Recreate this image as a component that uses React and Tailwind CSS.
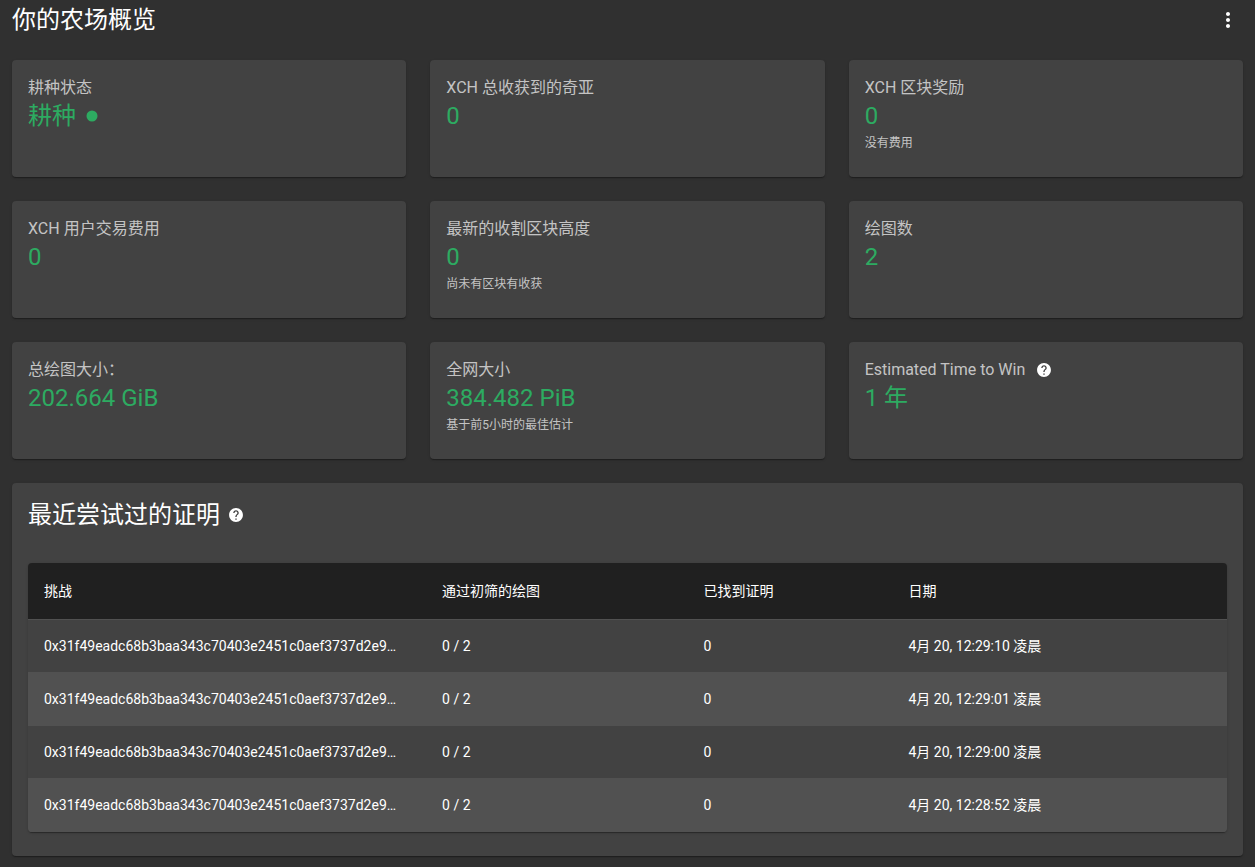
import React from 'react';

const MoreIcon = () => (
    <svg viewBox="0 0 24 24" className="size-6 fill-current" aria-hidden="true">
        <path d="M12 8c1.100 0 2-.9 2-2s-.9-2-2-2-2 .9-2 2 .9 2 2 2zm0 2c-1.100 0-2 .9-2 2s.9 2 2 2 2-.9 2-2-.9-2-2-2zm0 6c-1.100 0-2 .9-2 2s.9 2 2 2 2-.9 2-2-.9-2-2-2z" />
    </svg>
);

const HelpIcon = () => (
    <svg viewBox="-1 -1 26 26" className="size-[18px] shrink-0 fill-white" aria-hidden="true">
        <path d="M12 2C6.480 2 2 6.480 2 12s4.480 10 10 10 10-4.480 10-10S17.520 2 12 2zm1 17h-2v-2h2v2zm2.070-7.750l-.9.920C13.450 12.900 13 13.500 13 15h-2v-.5c0-1.100.45-2.100 1.170-2.830l1.240-1.260c.37-.36.59-.86.59-1.410 0-1.100-.9-2-2-2s-2 .9-2 2H8c0-2.210 1.790-4 4-4s4 1.790 4 4c0 .88-.36 1.680-.93 2.250z" />
    </svg>
);

const StatusDot = () => (
    <svg viewBox="0 0 12 12" className="size-3 shrink-0 fill-current" aria-hidden="true">
        <circle cx="6" cy="6" r="5.5" />
    </svg>
);

const paperShadow =
    'shadow-[0_2px_1px_-1px_rgba(0,0,0,0.2),0_1px_1px_0_rgba(0,0,0,0.14),0_1px_3px_0_rgba(0,0,0,0.12)]';

const cards = [
    { title: '耕种状态', value: '耕种', dot: true },
    { title: 'XCH 总收获到的奇亚', value: '0' },
    { title: 'XCH 区块奖励', value: '0', description: '没有费用' },
    { title: 'XCH 用户交易费用', value: '0' },
    { title: '最新的收割区块高度', value: '0', description: '尚未有区块有收获' },
    { title: '绘图数', value: '2' },
    { title: '总绘图大小：', value: '202.664 GiB' },
    { title: '全网大小', value: '384.482 PiB', description: '基于前5小时的最佳估计' },
    { title: 'Estimated Time to Win', value: '1 年', help: true },
];

const challenge = '0x31f49eadc68b3baa343c70403e2451c0aef3737d2e9…';

const proofs = [
    { challenge, passed: '0 / 2', found: 0, date: '4月 20, 12:29:10 凌晨' },
    { challenge, passed: '0 / 2', found: 0, date: '4月 20, 12:29:01 凌晨' },
    { challenge, passed: '0 / 2', found: 0, date: '4月 20, 12:29:00 凌晨' },
    { challenge, passed: '0 / 2', found: 0, date: '4月 20, 12:28:52 凌晨' },
];

const FarmCard = ({ title, value, description, dot, help }) => (
    <div className={`min-h-[117px] rounded bg-[#424242] px-4 pt-4 pb-5 ${paperShadow}`}>
        <div className="flex items-center gap-2.5 text-base leading-6 text-white/70">
            <span>{title}</span>
            {help && <HelpIcon />}
        </div>
        <div className="flex items-center gap-2.5 text-2xl leading-8 text-[#2dab61]">
            <span>{value}</span>
            {dot && <StatusDot />}
        </div>
        {description && <p className="text-xs leading-[22px] text-white/70">{description}</p>}
    </div>
);

const ProofsTable = () => (
    <div className={`overflow-hidden rounded bg-[#424242] ${paperShadow}`}>
        <table className="w-full table-fixed border-separate border-spacing-0 text-left text-sm leading-5">
            <thead className="bg-[#202020]">
                <tr className="h-[57px]">
                    <th className="w-[33.2%] border-b border-[#515151] px-4 font-normal">挑战</th>
                    <th className="w-[21.8%] border-b border-[#515151] px-4 font-normal">通过初筛的绘图</th>
                    <th className="w-[17.1%] border-b border-[#515151] px-4 font-normal">已找到证明</th>
                    <th className="border-b border-[#515151] px-4 font-normal">日期</th>
                </tr>
            </thead>
            <tbody>
                {proofs.map((proof) => (
                    <tr key={proof.date} className="h-[53px] even:bg-[#515151]">
                        <td className="truncate border-b border-[#515151] px-4">{proof.challenge}</td>
                        <td className="border-b border-[#515151] px-4">{proof.passed}</td>
                        <td className="border-b border-[#515151] px-4">{proof.found}</td>
                        <td className="border-b border-[#515151] px-4">{proof.date}</td>
                    </tr>
                ))}
            </tbody>
        </table>
    </div>
);

const App = () => {
    return (
        <main
            lang="zh-CN"
            className="flex min-h-screen flex-col gap-6 bg-[#303030] px-3 pt-1 pb-2 font-[Roboto,'Noto_Sans_CJK_SC',sans-serif] text-white"
        >
            <header className="flex items-center justify-between">
                <h1 className="text-2xl leading-8">你的农场概览</h1>
                <button type="button" aria-label="更多" className="mr-[3px] cursor-pointer">
                    <MoreIcon />
                </button>
            </header>

            <section className="grid grid-cols-3 gap-6">
                {cards.map((card) => (
                    <FarmCard key={card.title} {...card} />
                ))}
            </section>

            <section className={`flex flex-col gap-8 rounded bg-[#424242] px-4 pt-4 pb-6 ${paperShadow}`}>
                <div className="flex items-center gap-[7px]">
                    <h2 className="text-2xl leading-8">最近尝试过的证明</h2>
                    <HelpIcon />
                </div>
                <ProofsTable />
            </section>
        </main>
    );
};

export default App;
